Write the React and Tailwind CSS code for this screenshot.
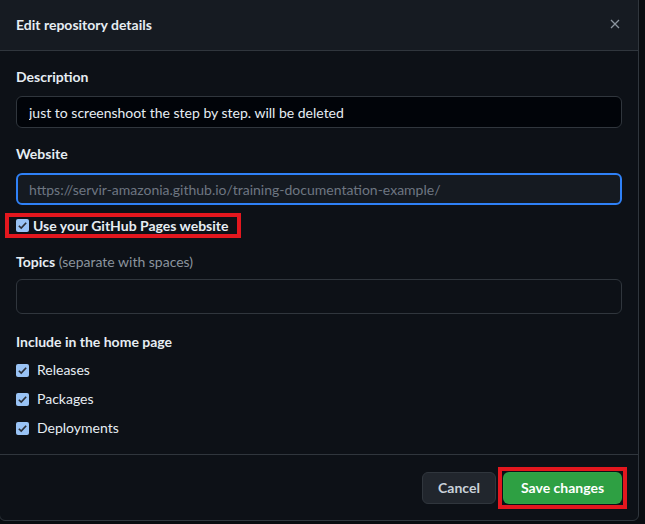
import { useState } from "react";

const CheckIcon = () => (
  <svg viewBox="0 0 12 12" className="w-[11px] h-[11px]">
    <path d="M2 6.3 L4.6 8.9 L10 3" fill="none" stroke="#2b2f36" strokeWidth="1.8" />
  </svg>
);

const Check = ({ checked, onChange }) => (
  <button
    type="button"
    onClick={onChange}
    className={
      "w-[13px] h-[13px] rounded-[2px] flex items-center justify-center shrink-0 " +
      (checked ? "bg-[#99c3f5]" : "border border-[#8b949e] bg-transparent")
    }
  >
    {checked && <CheckIcon />}
  </button>
);

const App = () => {
  const [pages, setPages] = useState(true);
  const [home, setHome] = useState({ Releases: true, Packages: true, Deployments: true });

  const toggleHome = (key) => {
    setHome({ ...home, [key]: !home[key] });
  };

  return (
    <div
      className="w-[645px] h-[524px] overflow-hidden bg-[#090c10] text-[14px] text-[#e6edf3]"
      style={{ fontFamily: "Lato, 'Liberation Sans', sans-serif" }}
    >
      <div className="-ml-px -mt-px w-[640px] border border-[#30363d] rounded-b-md bg-[#0d1117] overflow-hidden">
        {/* header */}
        <div className="h-[51px] bg-[#161b22] border-b border-[#30363d] flex items-center justify-between pl-4 pr-[7px]">
          <h1 className="font-bold text-[14px] text-[#e6edf3] -mt-[2px]">Edit repository details</h1>
          <button className="w-8 h-8 flex items-center justify-center text-[#8b949e] -mt-[2px]">
            <svg viewBox="0 0 10 10" className="w-[10px] h-[10px]">
              <path d="M1 1 L9 9 M9 1 L1 9" stroke="currentColor" strokeWidth="1.3" fill="none" />
            </svg>
          </button>
        </div>

        {/* body */}
        <div className="px-4 pt-4 pb-4">
          <label className="block font-bold leading-5 mb-[9px]">Description</label>
          <input
            type="text"
            defaultValue="just to screenshoot the step by step. will be deleted"
            className="w-full h-8 px-3 rounded-md bg-[#010409] border border-[#30363d] text-[#e6edf3] text-[14px] outline-none"
          />

          <label className="block font-bold leading-5 mt-4 mb-[9px]">Website</label>
          <input
            type="text"
            placeholder="https://servir-amazonia.github.io/training-documentation-example/"
            className="w-full h-8 px-[11px] rounded-md bg-[#151a21] border-2 border-[#2f81f7] text-[#e6edf3] text-[14px] outline-none placeholder:text-[#6e7681]"
          />

          <div className="-ml-[11px] mt-[8px] w-[236px] h-[25px] border-4 border-[#e3171e] flex items-center gap-[4px] pl-[7px]">
            <Check checked={pages} onChange={() => setPages(!pages)} />
            <span className="font-bold leading-5">Use your GitHub Pages website</span>
          </div>

          <label className="block leading-5 mt-[14px] mb-[7px]">
            <span className="font-bold">Topics</span>{" "}
            <span className="text-[#8b949e]">(separate with spaces)</span>
          </label>
          <input
            type="text"
            className="w-full h-[35px] px-3 rounded-md bg-[#0d1117] border border-[#30363d] text-[#e6edf3] outline-none"
          />

          <div className="font-bold leading-5 mt-[18px]">Include in the home page</div>
          <div className="mt-2 flex flex-col gap-[9px]">
            {Object.keys(home).map((key) => (
              <div key={key} className="flex items-center gap-2 h-5">
                <Check checked={home[key]} onChange={() => toggleHome(key)} />
                <span className="leading-5">{key}</span>
              </div>
            ))}
          </div>
        </div>

        {/* footer */}
        <div className="border-t border-[#30363d] flex justify-end items-center gap-[7px] px-4 pt-4 pb-4 h-[66px]">
          <button className="h-8 w-[74px] rounded-md bg-[#21262d] border border-[#30363d] text-[#c9d1d9] font-bold">
            Cancel
          </button>
          <div className="border-4 border-[#e3171e] p-px -m-[5px]">
            <button className="h-8 w-[119px] rounded-md bg-[#2ea043] border border-[#3fb950]/20 text-white font-bold">
              Save changes
            </button>
          </div>
        </div>
      </div>
    </div>
  );
};

export default App;
